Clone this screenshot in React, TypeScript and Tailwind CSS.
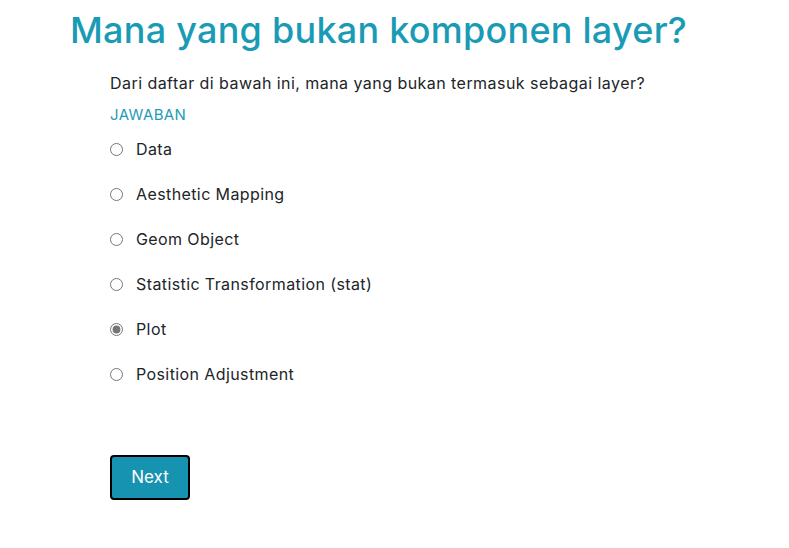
export default function App() {
  const options = [
    "Data",
    "Aesthetic Mapping",
    "Geom Object",
    "Statistic Transformation (stat)",
    "Plot",
    "Position Adjustment",
  ];
  return (
    <div className="w-[789px] h-[548px] bg-white font-['Inter',sans-serif] text-[#212529]">
      <h1 className="pl-[70px] pt-[8px] text-[36px] leading-[44px] font-medium tracking-[0.25px] text-[#1a9bb5]">
        Mana yang bukan komponen layer?
      </h1>
      <div className="pl-[110px]">
        <p className="mt-[19px] text-[16px] leading-[24px] tracking-[0.45px]">
          Dari daftar di bawah ini, mana yang bukan termasuk sebagai layer?
        </p>
        <div className="mt-[8px] text-[15px] leading-[24px] tracking-[0.4px] text-[#1f9cb8]">JAWABAN</div>
        <div className="mt-[10px] flex flex-col gap-[21px]">
          {options.map((o) => (
            <label key={o} className="flex items-center h-[24px] text-[16px] tracking-[0.4px]">
              <input
                type="radio"
                name="ans"
                defaultChecked={o === "Plot"}
                className="w-[13px] h-[13px] m-0 mr-[13px] accent-[#767676]"
              />
              {o}
            </label>
          ))}
        </div>
        <button className="mt-[69px] w-[80px] h-[45px] rounded-[4px] border-2 border-black bg-[#1693b0] text-white text-[17px]">
          Next
        </button>
      </div>
    </div>
  );
}
